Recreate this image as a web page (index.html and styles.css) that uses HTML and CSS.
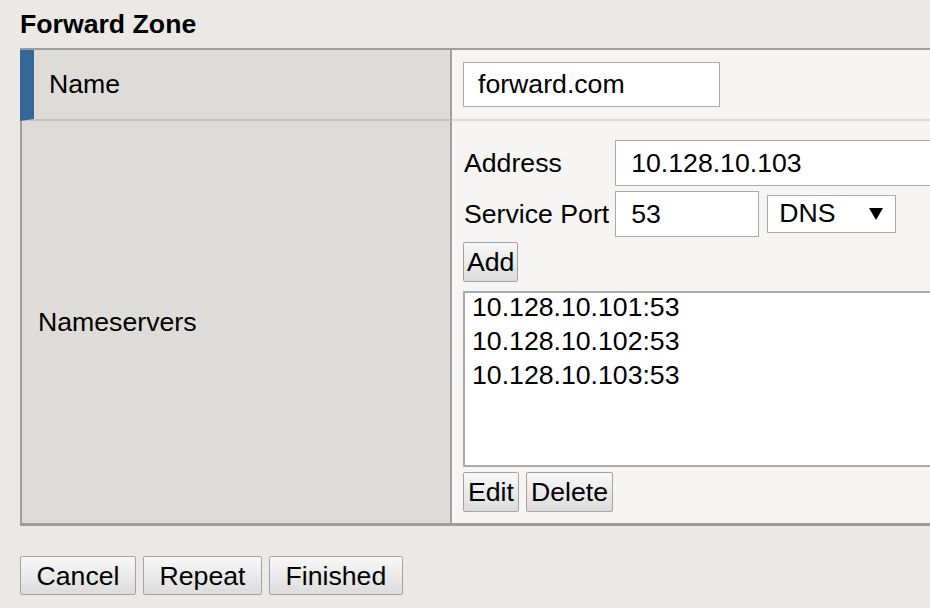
FILE: index.html
```html
<!DOCTYPE html>
<html>
<head>
<meta charset="utf-8">
<link rel="stylesheet" href="styles.css">
</head>
<body>
<h1 class="title">Forward Zone</h1>
<div class="zone">
  <div class="row row-name">
    <div class="label label-name">Name</div>
    <div class="field field-name"><div class="text-input name-input">forward.com</div></div>
  </div>
  <div class="row row-ns">
    <div class="label label-ns">Nameservers</div>
    <div class="field field-ns">
      <div class="ns-grid">
        <span class="ns-label">Address</span>
        <div class="text-input addr-input">10.128.10.103</div>
        <span class="ns-label">Service Port</span>
        <div class="port-line">
          <div class="text-input port-input">53</div>
          <div class="select-box"><span>DNS</span><svg class="caret" width="14" height="12" viewBox="0 0 14 12"><polygon points="0,0 14,0 7,12" fill="#000"/></svg></div>
        </div>
      </div>
      <button class="btn btn-small add-btn">Add</button>
      <div class="listbox">
        <div class="opt">10.128.10.101:53</div>
        <div class="opt">10.128.10.102:53</div>
        <div class="opt">10.128.10.103:53</div>
      </div>
      <div class="list-actions">
        <button class="btn btn-small">Edit</button>
        <button class="btn btn-small">Delete</button>
      </div>
    </div>
  </div>
</div>
<div class="actions">
  <button class="btn btn-main">Cancel</button>
  <button class="btn btn-main">Repeat</button>
  <button class="btn btn-main">Finished</button>
</div>
</body>
</html>
```

FILE: styles.css
```css
html, body {
  margin: 0;
  padding: 0;
  overflow: hidden;
  width: 930px;
  height: 608px;
}
body {
  background: #eae9e5;
  font-family: "Liberation Sans", Arial, sans-serif;
  font-size: 26.67px;
  color: #000;
  padding-left: 20px;
  box-sizing: border-box;
}
.title {
  margin: 0 0 9px 0;
  padding-top: 9px;
  font-size: 26.67px;
  line-height: 30px;
  font-weight: bold;
}
.zone {
  width: 1100px;
  border-top: 2px solid #9d9d9d;
  border-bottom: 3px solid #9d9d9d;
}
.row {
  display: grid;
  grid-template-columns: 432px 1fr;
}
.label {
  box-sizing: border-box;
  background: #dddcd8;
  border-right: 2px solid #a0a0a0;
  display: flex;
  align-items: center;
}
.label-name {
  border-left: 14px solid #356898;
  padding-left: 15px;
  border-bottom: 2px solid #c4c2be;
}
.label-ns {
  border-left: 2px solid #a0a0a0;
  padding-left: 16px;
}
.field {
  background: #f6f5f3;
}
.field-name {
  padding: 12px 11px;
  border-bottom: 2px solid #dcdad7;
}
.text-input {
  box-sizing: border-box;
  background: #fff;
  border: 1px solid #aaaaaa;
  height: 45px;
  line-height: 43px;
  padding-left: 14px;
}
.name-input {
  width: 257px;
}
.field-ns {
  padding: 19px 11px 11px 11px;
  height: 402px;
  box-sizing: border-box;
}
.ns-grid {
  display: grid;
  grid-template-columns: auto 1fr;
  column-gap: 6px;
  row-gap: 5px;
  align-items: center;
}
.ns-label {
  padding-left: 1px;
}
.addr-input {
  width: 400px;
  height: 46px;
  line-height: 44px;
  padding-left: 15px;
}
.port-line {
  display: flex;
  align-items: center;
  gap: 8px;
}
.port-input {
  width: 144px;
  height: 46px;
  line-height: 44px;
  padding-left: 15px;
}
.select-box {
  box-sizing: border-box;
  width: 129px;
  height: 38px;
  background: #fff;
  border: 1px solid #aaaaaa;
  display: flex;
  align-items: center;
  justify-content: space-between;
  padding: 0 12px 3px 11px;
  line-height: 30px;
}
.caret {
  display: block;
  margin-top: 3px;
}
.btn {
  font-family: "Liberation Sans", Arial, sans-serif;
  font-size: 26.67px;
  color: #000;
  box-sizing: border-box;
  height: 40px;
  line-height: 36px;
  border: 1px solid #a3a3a3;
  border-radius: 2px;
  background: linear-gradient(#f8f8f8, #dcdcdc);
  margin: 0;
}
.btn-small {
  padding: 0 4px;
}
.add-btn {
  display: block;
  margin-top: 5px;
  padding: 0 3px;
}
.listbox {
  box-sizing: border-box;
  margin-top: 9px;
  width: 600px;
  height: 176px;
  background: #fff;
  border: 2px solid #aaaaaa;
  padding: 0 7px;
}
.opt {
  line-height: 28px;
  padding-bottom: 6px;
}
.list-actions {
  margin-top: 5px;
  display: flex;
  gap: 7px;
}
.actions {
  margin-top: 30px;
  display: flex;
  gap: 7px;
}
.btn-main {
  height: 39px;
  padding: 0 15.5px;
}
```
